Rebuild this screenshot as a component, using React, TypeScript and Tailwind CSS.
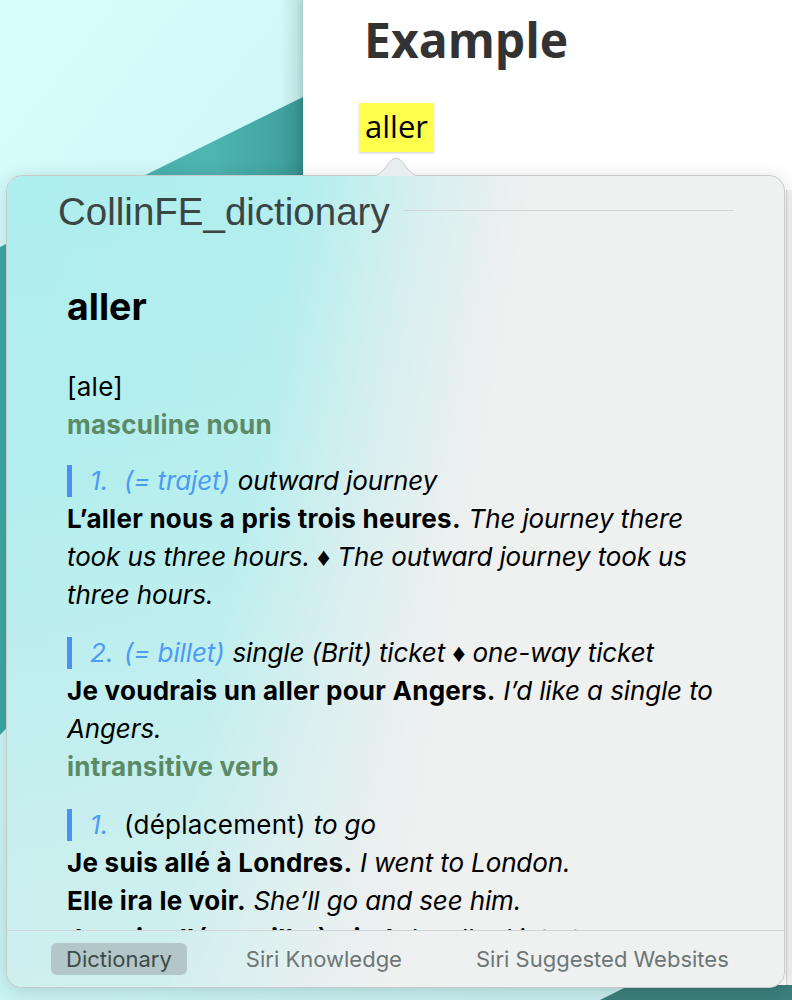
import React from 'react';

interface Sense {
  num: string;
  gloss?: string;
  label?: string;
  trans: string;
  examples: { fr: string; en: string }[];
}

const nounSenses: Sense[] = [
  {
    num: '1.',
    gloss: '(= trajet)',
    trans: 'outward journey',
    examples: [
      {
        fr: 'L’aller nous a pris trois heures.',
        en: 'The journey there took us three hours. ♦ The outward journey took us three hours.',
      },
    ],
  },
  {
    num: '2.',
    gloss: '(= billet)',
    trans: 'single (Brit) ticket ♦ one-way ticket',
    examples: [{ fr: 'Je voudrais un aller pour Angers.', en: 'I’d like a single to Angers.' }],
  },
];

const verbSenses: Sense[] = [
  {
    num: '1.',
    label: '(déplacement)',
    trans: 'to go',
    examples: [
      { fr: 'Je suis allé à Londres.', en: 'I went to London.' },
      { fr: 'Elle ira le voir.', en: 'She’ll go and see him.' },
      { fr: 'Je suis allé en ville à pied.', en: 'I walked into town.' },
    ],
  },
];

function SenseBlock({ sense, first }: { sense: Sense; first?: boolean }) {
  return (
    <div className={first ? 'mt-[18px]' : 'mt-[20px]'}>
      <div className="flex items-center h-[38px] whitespace-nowrap">
        <span className="w-[5px] h-[32px] bg-[#4a90f5] shrink-0" />
        <span className="ml-[18px] italic text-[#4c9bf4] w-[34px]">{sense.num}</span>
        {sense.gloss && (
          <span className="italic tracking-[-0.005em] text-[#4c9bf4] mr-[8px]">{sense.gloss}</span>
        )}
        {sense.label && <span className="mr-[8px]">{sense.label}</span>}
        <span className="italic tracking-[-0.005em]">{sense.trans}</span>
      </div>
      {sense.examples.map((ex, i) => (
        <p key={i}>
          <span className="font-bold">{ex.fr}</span>{' '}
          <span className="italic tracking-[-0.005em]">{ex.en}</span>
        </p>
      ))}
    </div>
  );
}

function Wallpaper() {
  return (
    <svg className="absolute inset-0" width="792" height="1000" viewBox="0 0 792 1000">
      <defs>
        <linearGradient id="sky" x1="0" y1="0" x2="1" y2="1">
          <stop offset="0%" stopColor="#d8fdfd" />
          <stop offset="60%" stopColor="#c6f1f1" />
          <stop offset="100%" stopColor="#c3e9e9" />
        </linearGradient>
        <linearGradient id="teal" x1="0" y1="0" x2="1" y2="0">
          <stop offset="0%" stopColor="#3da8a4" />
          <stop offset="70%" stopColor="#4fb5b1" />
          <stop offset="100%" stopColor="#3c9e9b" />
        </linearGradient>
        <linearGradient id="shade" x1="0" y1="0" x2="1" y2="0">
          <stop offset="0%" stopColor="rgba(0,0,0,0)" />
          <stop offset="100%" stopColor="rgba(0,40,40,0.12)" />
        </linearGradient>
      </defs>
      <rect width="792" height="1000" fill="url(#sky)" />
      <polygon points="0,247 303,97 303,420 0,735" fill="url(#teal)" />
      <polygon points="600,1000 700,950 792,905 792,1000" fill="#3b7e7b" />
      <rect x="280" y="0" width="23" height="180" fill="url(#shade)" />
    </svg>
  );
}

export default function App() {
  return (
    <div className="relative w-[792px] h-[1000px] overflow-hidden font-['Inter',sans-serif]">
      <Wallpaper />

      {/* window behind */}
      <div className="absolute left-[303px] top-0 right-0 h-[985px] bg-white flex shadow-[-2px_0_6px_rgba(0,0,0,0.1)]">
        <div className="flex-1 pl-[61px] pt-[7px] font-['Open_Sans',sans-serif]">
          <h1 className="text-[48px] leading-[66px] font-bold text-[#333]">Example</h1>
          <div className="mt-[30px] ml-[-5px] inline-block bg-[#ffff4d] px-[6px] h-[49px] leading-[47px] text-[31px] text-black shadow-[0_1px_2px_rgba(0,0,0,0.2)]">
            aller
          </div>
        </div>
        <div className="w-[6px] mt-[190px] border-l border-[#d4d6d6] bg-[#f2f2f2]" />
      </div>

      {/* dictionary popover */}
      <div className="absolute left-[6px] top-[175px] w-[779px] h-[813px] rounded-[16px] border border-[#c6caca] shadow-[0_2px_18px_rgba(0,0,0,0.14)] bg-[#eff0f0]">
        <svg className="absolute left-[359px] top-[-24px]" width="60" height="26" viewBox="0 0 60 26">
          <path d="M0 25 C12 25 16 21 22 12 Q30 0 38 12 C44 21 48 25 60 25 L60 26 L0 26 Z" fill="#e9efef" />
          <path d="M0 25 C12 25 16 21 22 12 Q30 0 38 12 C44 21 48 25 60 25" fill="none" stroke="#c6caca" strokeWidth="1" />
        </svg>

        <div className="absolute inset-0 rounded-[16px] overflow-hidden flex flex-col bg-[linear-gradient(100deg,#adeeee_0%,#b3eeee_32%,#d6efef_45%,#eff0f0_57%)]">
          <div className="absolute inset-0 bg-[linear-gradient(180deg,rgba(239,240,240,0)_0%,rgba(239,240,240,0.1)_40%,rgba(239,240,240,0.5)_100%)]" />

          <div className="relative flex-1 min-h-0 overflow-hidden">
            <div className="flex items-center pl-[51px] pr-[51px] pt-[12px]">
              <span className="text-[38.5px] leading-[48px] text-[#3b4545] font-['Liberation_Sans',sans-serif]">
                CollinFE_dictionary
              </span>
              <span className="flex-1 h-px bg-[#d1d5d5] ml-[13px] mt-[-4px]" />
            </div>

            <div className="pl-[60px] pr-[50px] text-[26px] leading-[38px] tracking-[0.01em] text-black">
              <h2 className="mt-[48px] text-[37.5px] leading-[46px] font-bold tracking-normal">aller</h2>
              <p className="mt-[38px]">[ale]</p>
              <p className="font-bold text-[#5a8a66]">masculine noun</p>
              {nounSenses.map((s, i) => (
                <SenseBlock key={i} sense={s} first={i === 0} />
              ))}
              <p className="font-bold text-[#5a8a66]">intransitive verb</p>
              {verbSenses.map((s, i) => (
                <SenseBlock key={i} sense={s} />
              ))}
            </div>
          </div>

          <div className="relative h-[57px] shrink-0 border-t border-[#d0d5d5] flex items-center pl-[44px] gap-[44px] text-[22px] text-[#6b7676]">
            <span className="px-[15px] h-[32px] leading-[32px] rounded-[6px] bg-[#b3c7c8] text-[#3e4a4a]">Dictionary</span>
            <span className="px-[15px]">Siri Knowledge</span>
            <span className="px-[15px]">Siri Suggested Websites</span>
          </div>
        </div>
      </div>
    </div>
  );
}
